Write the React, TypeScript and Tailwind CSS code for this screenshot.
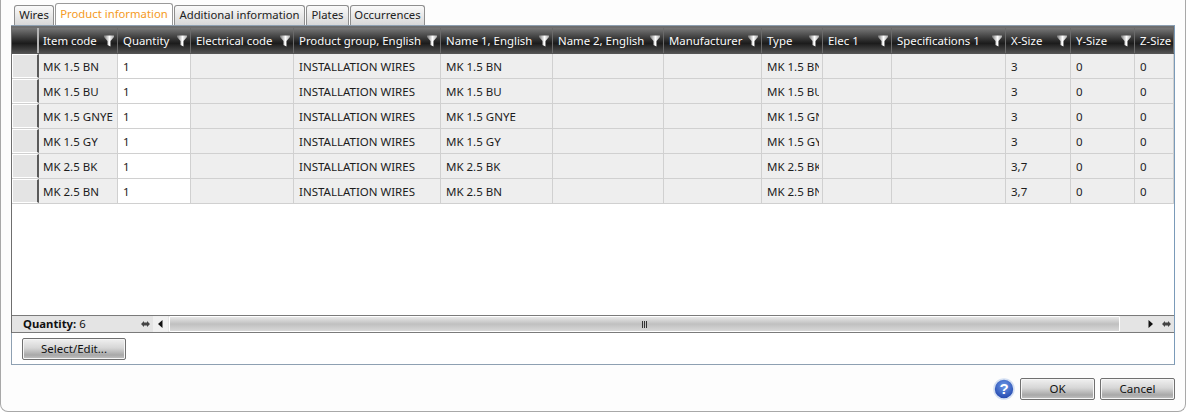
import { useId } from "react"

type Column = { title: string; width: string; pad: string; filter?: boolean }

const columns: Column[] = [
  { title: "Item code", width: "w-[79px]", pad: "pl-1" },
  { title: "Quantity", width: "w-[73px]", pad: "pl-[5px]" },
  { title: "Electrical code", width: "w-[103px]", pad: "pl-[5px]" },
  { title: "Product group, English", width: "w-[147px]", pad: "pl-[5px]" },
  { title: "Name 1, English", width: "w-[112px]", pad: "pl-[5px]" },
  { title: "Name 2, English", width: "w-[111px]", pad: "pl-[5px]" },
  { title: "Manufacturer", width: "w-[98px]", pad: "pl-[5px]" },
  { title: "Type", width: "w-[61px]", pad: "pl-[5px]" },
  { title: "Elec 1", width: "w-[69px]", pad: "pl-[5px]" },
  { title: "Specifications 1", width: "w-[114px]", pad: "pl-[5px]" },
  { title: "X-Size", width: "w-[65px]", pad: "pl-[5px]" },
  { title: "Y-Size", width: "w-[64px]", pad: "pl-[5px]" },
  { title: "Z-Size", width: "w-[39px]", pad: "pl-[5px]", filter: false },
]

const rows = [
  { code: "MK 1.5 BN", x: "3" },
  { code: "MK 1.5 BU", x: "3" },
  { code: "MK 1.5 GNYE", x: "3" },
  { code: "MK 1.5 GY", x: "3" },
  { code: "MK 2.5 BK", x: "3,7" },
  { code: "MK 2.5 BN", x: "3,7" },
]

const tabs = [
  { label: "Wires", width: "w-[40px]" },
  { label: "Product information", width: "w-[118px]" },
  { label: "Additional information", width: "w-[131px]" },
  { label: "Plates", width: "w-[43px]" },
  { label: "Occurrences", width: "w-[75px]" },
]

function FilterIcon() {
  const id = useId()
  return (
    <svg width="10" height="12" viewBox="0 0 10 12" className="shrink-0">
      <defs>
        <linearGradient id={id} x1="0" y1="0" x2="1" y2="0">
          <stop offset="0" stopColor="#777777" />
          <stop offset="0.55" stopColor="#ffffff" />
          <stop offset="1" stopColor="#a8a8a8" />
        </linearGradient>
      </defs>
      <path d="M0 0.5H10V2L6.5 6V11.5L3.5 10V6L0 2Z" fill={`url(#${id})`} />
    </svg>
  )
}

function HeaderCell({ col }: { col: Column }) {
  return (
    <div
      className={`${col.width} ${col.pad} shrink-0 h-full flex items-center justify-between pr-[3px] border-r border-[#6a6a6a] overflow-hidden`}
    >
      <span className="whitespace-nowrap text-[#fafafa] text-[11.4px]">{col.title}</span>
      {col.filter !== false && <FilterIcon />}
    </div>
  )
}

function Cell({ col, value, white }: { col: Column; value?: string; white?: boolean }) {
  return (
    <div
      className={`${col.width} ${col.pad} shrink-0 h-full flex items-center pr-[3px] border-r border-[#d0d0d0] ${
        white ? "bg-white" : "bg-[#eeeeee]"
      }`}
    >
      <span className="block w-full overflow-hidden whitespace-nowrap text-[#1c1c1c] pt-px">{value}</span>
    </div>
  )
}

function Arrow({ dir }: { dir: "left" | "right" }) {
  return (
    <svg width="5" height="8" viewBox="0 0 5 8">
      <path d={dir === "left" ? "M4.5 0V8L0 4Z" : "M0.5 0V8L5 4Z"} fill="#111" />
    </svg>
  )
}

function DoubleArrow() {
  return (
    <svg width="9" height="8" viewBox="0 0 9 8">
      <path d="M0 4L3 1V2.5H6V1L9 4L6 7V5.5H3V7Z" fill="#444" />
    </svg>
  )
}

function GrayButton({ label, width }: { label: string; width: string }) {
  return (
    <button
      className={`${width} h-[22px] rounded-[2px] border border-[#707070] shadow-[inset_0_0_0_1px_#f6f6f6] bg-[linear-gradient(180deg,#f0f0f0_0%,#d6d6d6_45%,#a8a8a8_80%,#c4c4c4_100%)] text-[#111] text-center leading-none`}
    >
      {label}
    </button>
  )
}

function HelpIcon() {
  const id = useId()
  return (
    <svg width="22" height="22" viewBox="0 0 22 22">
      <defs>
        <radialGradient id={id} cx="0.5" cy="0.35" r="0.7">
          <stop offset="0" stopColor="#6d9ae8" />
          <stop offset="1" stopColor="#1c3fa8" />
        </radialGradient>
      </defs>
      <circle cx="11" cy="11" r="10" fill={`url(#${id})`} stroke="#d5e0f2" strokeWidth="1.6" />
      <text x="11" y="16" textAnchor="middle" fontSize="15" fontWeight="700" fill="#fff" fontFamily="'Liberation Sans', sans-serif">
        ?
      </text>
    </svg>
  )
}

export default function App() {
  return (
    <div className="w-[1186px] h-[412px] overflow-hidden bg-white font-['Noto_Sans',sans-serif] text-[11.5px]">
      <div className="h-full rounded-b-[8px] border-x border-b border-[#a8a8a8] bg-[#fdfdfd] px-[10px] flex flex-col">
        {/* tabs */}
        <div className="h-[25px] pl-[3px] flex items-end gap-px text-[11.3px]">
          {tabs.map((t, i) => (
            <div
              key={t.label}
              className={`${t.width} rounded-t-[3px] border border-b-0 flex items-center justify-center whitespace-nowrap ${
                i === 1
                  ? "h-[22px] border-[#9a9a9a] bg-white text-[#f59a23]"
                  : "h-5 border-[#8e8e8e] bg-gradient-to-b from-[#fafafa] to-[#d8d8d8] text-[#222]"
              }`}
            >
              {t.label}
            </div>
          ))}
        </div>

        {/* panel */}
        <div className="h-[340px] border border-[#8ea0b2] border-r-[#7a9ab8] bg-white flex flex-col">
          <div className="h-[307px] border-t-2 border-[#6e6e6e] shadow-[-1px_0_0_#6e6e6e] flex flex-col overflow-hidden">
            <div className="h-[26px] shrink-0 flex bg-[linear-gradient(180deg,#787878_0%,#242424_55%,#1c1c1c_62%,#505050_100%)] border-b border-[#555]">
              <div className="w-[27px] shrink-0 h-full border-r-2 border-[#b5b5b5]" />
              {columns.map((c) => (
                <HeaderCell key={c.title} col={c} />
              ))}
            </div>

            <div className="flex-1 flex flex-col bg-white">
              {rows.map((r) => (
                <div key={r.code} className="h-[25px] flex border-b border-[#d0d0d0]">
                  <div className="w-[27px] shrink-0 h-full bg-[#e4e4e4] border border-white border-r-2 border-r-[#5a5a5a]" />
                  <Cell col={columns[0]} value={r.code} />
                  <Cell col={columns[1]} value="1" white />
                  <Cell col={columns[2]} />
                  <Cell col={columns[3]} value="INSTALLATION WIRES" />
                  <Cell col={columns[4]} value={r.code} />
                  <Cell col={columns[5]} />
                  <Cell col={columns[6]} />
                  <Cell col={columns[7]} value={r.code} />
                  <Cell col={columns[8]} />
                  <Cell col={columns[9]} />
                  <Cell col={columns[10]} value={r.x} />
                  <Cell col={columns[11]} value="0" />
                  <Cell col={columns[12]} value="0" />
                </div>
              ))}
            </div>

            {/* footer strip */}
            <div className="h-[18px] shrink-0 flex border-y border-[#7a7a7a] bg-[#e4e4e4]">
              <div className="w-[141px] shrink-0 flex items-center justify-between pl-[11px] pr-[3px]">
                <span className="text-[#111] text-[11.3px]">
                  <b className="font-bold">Quantity:</b> 6
                </span>
                <DoubleArrow />
              </div>
              <div className="w-[15px] shrink-0 flex items-center justify-center bg-[#f0f0f0]">
                <Arrow dir="left" />
              </div>
              <div className="w-[951px] shrink-0 mx-px rounded-[1px] border border-white bg-gradient-to-b from-[#e8e8e8] via-[#c0c0c0] to-[#d8d8d8] flex items-center justify-center gap-px">
                <span className="w-px h-[7px] bg-[#333]" />
                <span className="w-px h-[7px] bg-[#333]" />
                <span className="w-px h-[7px] bg-[#333]" />
              </div>
              <div className="flex-1 flex items-center justify-end gap-[9px] pr-[3px]">
                <Arrow dir="right" />
                <DoubleArrow />
              </div>
            </div>
          </div>

          <div className="pl-[10px] pt-[5px]">
            <GrayButton label="Select/Edit..." width="w-[104px]" />
          </div>
        </div>

        {/* dialog buttons */}
        <div className="flex items-center justify-end mt-[13px]">
          <HelpIcon />
          <div className="w-[5px]" />
          <GrayButton label="OK" width="w-[75px]" />
          <div className="w-[5px]" />
          <GrayButton label="Cancel" width="w-[75px]" />
        </div>
      </div>
    </div>
  )
}
